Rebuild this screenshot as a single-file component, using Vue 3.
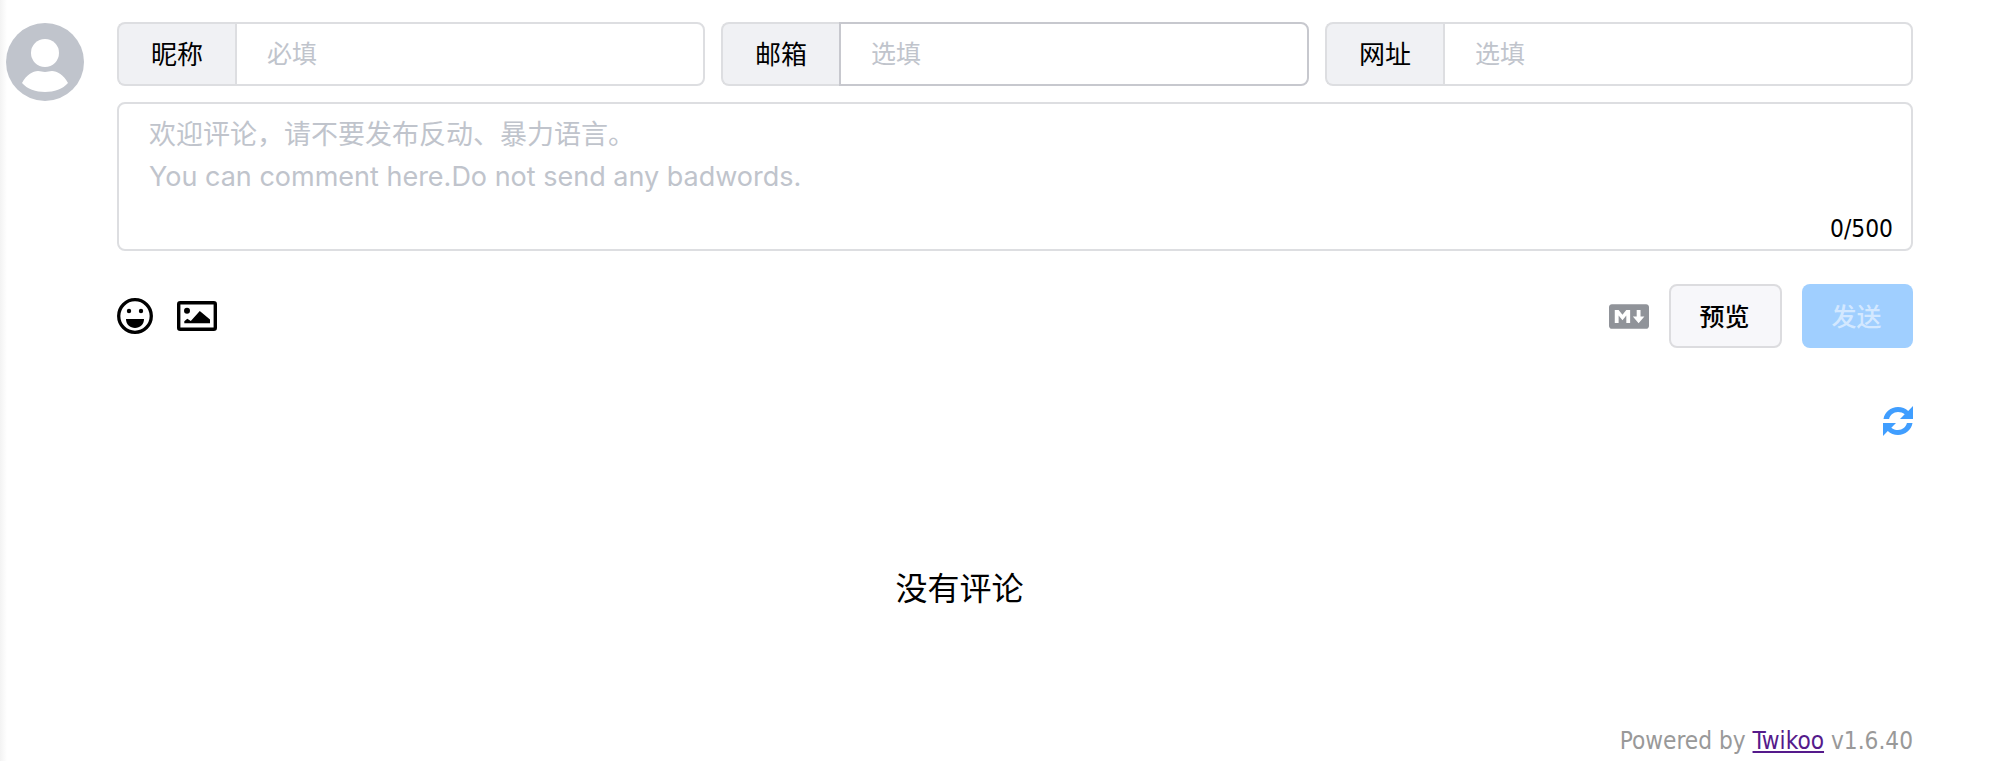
<template>
  <div class="page">
    <!-- форма -->
    <div class="submit">
      <div class="avatar">
        <svg viewBox="0 0 78 78" width="78" height="78">
          <circle cx="39" cy="39" r="39" fill="#c0c4cc" />
          <circle cx="39" cy="30" r="14" fill="#fff" />
          <path d="M16 60c4-8 11-12 16-12 3 0 4 1 7 1s4-1 7-1c5 0 12 4 16 12-5 6-14 9-23 9s-18-3-23-9z" fill="#fff" />
        </svg>
      </div>
      <div class="main">
        <div class="meta">
          <div v-for="f in fields" :key="f.label" class="group" :class="{ hover: f.hover }">
            <span class="label">{{ f.label }}</span>
            <input class="field" type="text" :placeholder="f.hint">
          </div>
        </div>
        <div class="text-wrap">
          <textarea class="text" :placeholder="hint"></textarea>
          <span class="count">0/500</span>
        </div>
        <div class="actions">
          <svg class="emoji" viewBox="0 0 36 36" width="36" height="36">
            <circle cx="18" cy="18" r="16.300" fill="none" stroke="#000" stroke-width="3.300" />
            <circle cx="12" cy="13" r="2.200" />
            <circle cx="24" cy="13" r="2.200" />
            <path d="M9 21h18c0 5.500-4 9-9 9s-9-3.500-9-9z" />
          </svg>
          <svg class="pic" viewBox="0 0 40 30" width="40" height="30">
            <rect x="1.700" y="1.700" width="36.600" height="26.600" rx="1.500" fill="none" stroke="#000" stroke-width="3.400" />
            <circle cx="10" cy="9.700" r="3" />
            <path d="M7.300 22.300v-2l3-2.600 3.500 2.400 9-10 10.200 8.500v3.700z" />
          </svg>
          <svg class="md" viewBox="0 59 640 394" width="40" height="25">
            <path fill="#909399" d="M593.8 59.1H46.2C20.7 59.1 0 79.8 0 105.2v301.500c0 25.500 20.700 46.200 46.200 46.200h547.700c25.500 0 46.200-20.700 46.100-46.100V105.200c0-25.400-20.700-46.100-46.200-46.100zM338.500 360.600H277v-120l-61.500 76.900-61.500-76.900v120H92.300V151.400h61.500l61.500 76.900 61.500-76.900h61.500v209.200zm135.300 3.100L381.500 256H443V151.400h61.500V256H566z" />
          </svg>
          <button class="btn preview">预览</button>
          <button class="btn send">发送</button>
        </div>
      </div>
    </div>

    <!-- список комментариев -->
    <div class="refresh">
      <svg viewBox="0 0 30 30" width="30" height="30">
        <g fill="#409eff">
          <path d="M.5 13C1.600 6.300 7.600 1 15 1c4 0 7.600 1.500 10.200 4L30 0v13H17l4.700-4.700C19.900 6.900 17.600 6 15 6c-4.400 0-8 3-8.900 7z" />
          <path d="M29.500 17C28.400 23.700 22.400 29 15 29c-4 0-7.600-1.500-10.200-4L0 30V17h13l-4.700 4.700C10.100 23.100 12.400 24 15 24c4.400 0 8-3 8.900-7z" />
        </g>
      </svg>
    </div>
    <div class="empty">没有评论</div>
    <div class="footer">Powered by <a href="#" class="link">Twikoo</a> v1.6.40</div>
  </div>
</template>

<script setup>
const fields = [
  { label: '昵称', hint: '必填' },
  { label: '邮箱', hint: '选填', hover: true },
  { label: '网址', hint: '选填' }
]
const hint = '欢迎评论，请不要发布反动、暴力语言。\nYou can comment here.Do not send any badwords.'
</script>

<style>
html, body {
  margin: 0;
  background: #fff;
  overflow: hidden;
}
</style>

<style scoped>
.page {
  box-sizing: border-box;
  height: 761px;
  padding: 22px 84px 0 6px;
  background: linear-gradient(to right, #f3f3f3 0, #fdfdfd 6px, #fff 7px);
  font-family: "Noto Sans CJK SC", "Liberation Sans", sans-serif;
  color: #000;
}

.submit {
  display: flex;
  gap: 33px;
}

.avatar {
  flex: none;
  width: 78px;
  height: 78px;
  margin-top: 1px;
}

.main {
  flex: 1;
  min-width: 0;
}

.meta {
  display: flex;
  gap: 16px;
}

.group {
  flex: 1;
  display: flex;
  height: 64px;
  box-sizing: border-box;
}

.label {
  flex: none;
  width: 118px;
  box-sizing: border-box;
  display: flex;
  align-items: center;
  justify-content: center;
  padding: 0 0 3px;
  background: #f0f1f4;
  border: 2px solid #dddee1;
  border-right: 0;
  border-radius: 8px 0 0 8px;
  font-size: 26px;
}

.field {
  flex: 1;
  min-width: 0;
  box-sizing: border-box;
  padding: 0 30px 4px;
  border: 2px solid #dddee1;
  border-radius: 0 8px 8px 0;
  outline: none;
  background: #fff;
  font-family: inherit;
  font-size: 25px;
}

.group.hover .field {
  border-color: #c7c8ce;
}

.field::placeholder,
.text::placeholder {
  color: #c0c4cc;
  opacity: 1;
}

.text-wrap {
  position: relative;
  margin-top: 16px;
}

.text {
  display: block;
  width: 100%;
  height: 149px;
  box-sizing: border-box;
  padding: 10px 30px 8px;
  border: 2px solid #dddee1;
  border-radius: 8px;
  outline: none;
  resize: none;
  font-family: Inter, "Noto Sans CJK SC", sans-serif;
  font-size: 27px;
  line-height: 42px;
}

.count {
  position: absolute;
  right: 20px;
  bottom: 8px;
  font-family: "DejaVu Sans Condensed", "DejaVu Sans", sans-serif;
  font-stretch: condensed;
  font-size: 24.300px;
}

.actions {
  display: flex;
  align-items: center;
  margin-top: 33px;
  height: 64px;
}

.pic {
  margin-left: 24px;
}

.md {
  margin-left: auto;
}

.btn {
  height: 64px;
  box-sizing: border-box;
  border-radius: 8px;
  font-family: inherit;
  font-size: 25px;
  font-weight: 500;
  padding: 0 2px 3px 0;
}

.preview {
  width: 113px;
  margin-left: 20px;
  background: #f7f7fa;
  border: 2px solid #dcdcdf;
  color: #000;
}

.send {
  width: 111px;
  margin-left: 20px;
  background: #a0cfff;
  border: 0;
  color: #d3e8ff;
}

.refresh {
  display: flex;
  justify-content: flex-end;
  margin-top: 58px;
  height: 30px;
}

.empty {
  margin-top: 126px;
  text-align: center;
  font-size: 32px;
  line-height: 48px;
}

.footer {
  margin-top: 117px;
  text-align: right;
  font-family: "DejaVu Sans Condensed", "DejaVu Sans", sans-serif;
  font-stretch: condensed;
  font-size: 24.200px;
  color: #999;
}

.link {
  color: #551a8b;
}
</style>
